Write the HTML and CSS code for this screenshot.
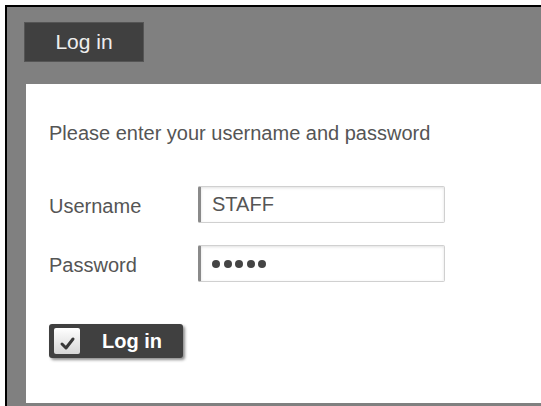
FILE: index.html
```html
<!DOCTYPE html>
<html lang="en">
<head>
<meta charset="utf-8">
<title>Log in</title>
<link rel="stylesheet" href="styles.css">
</head>
<body>
<div class="window">
  <div class="tab">Log in</div>
  <div class="panel">
    <p class="intro">Please enter your username and password</p>
    <div class="form-row first">
      <span class="label">Username</span>
      <div class="field">STAFF</div>
    </div>
    <div class="form-row">
      <span class="label">Password</span>
      <div class="field secret">
        <span class="dot"></span><span class="dot"></span><span class="dot"></span><span class="dot"></span><span class="dot"></span>
      </div>
    </div>
    <button class="btn" type="button">
      <span class="check">
        <svg width="26" height="26" viewBox="0 0 26 26"><polyline points="8,16 12,20 19,11" fill="none" stroke="#383838" stroke-width="3" stroke-linecap="round" stroke-linejoin="round"/></svg>
      </span>
      Log in
    </button>
  </div>
</div>
</body>
</html>
```

FILE: styles.css
```css
html, body {
  margin: 0;
  padding: 0;
  background: #fff;
  font-family: "Liberation Sans", Arial, sans-serif;
}

.window {
  margin: 5px 0 0 5px;
  height: 401px;
  box-sizing: border-box;
  border-top: 2px solid #000;
  border-left: 2px solid #000;
  background: #808080;
  padding: 15px 0 0 17px;
  display: flex;
  flex-direction: column;
  overflow: hidden;
}

.tab {
  width: 120px;
  height: 40px;
  box-sizing: border-box;
  border: 1px solid #555;
  background: #404040;
  color: #eee;
  font-size: 21px;
  display: flex;
  align-items: center;
  justify-content: center;
  flex: none;
}

.panel {
  flex: 1;
  margin: 22px 0 3px 2px;
  background: #fff;
  padding: 38px 0 0 23px;
}

.intro {
  margin: 0;
  font-size: 20px;
  line-height: 23px;
  color: #555;
}

.form-row {
  display: flex;
  align-items: center;
  height: 37px;
  margin-top: 22px;
}

.form-row.first {
  margin-top: 41px;
}

.label {
  width: 149px;
  padding-top: 3px;
  font-size: 20px;
  line-height: 23px;
  color: #555;
}

.field {
  width: 247px;
  height: 37px;
  box-sizing: border-box;
  border: 1px solid #d0d0d0;
  border-left: 3px solid #8a8a8a;
  border-radius: 2px;
  box-shadow: inset 0 1px 3px rgba(0, 0, 0, 0.12);
  padding: 0 11px;
  display: flex;
  align-items: center;
  font-size: 20px;
  line-height: 23px;
  color: #555;
}

.secret {
  gap: 3.5px;
}

.dot {
  width: 8px;
  height: 8px;
  border-radius: 50%;
  background: #444;
}

.btn {
  margin-top: 42px;
  width: 134px;
  height: 34px;
  border: none;
  border-radius: 3px;
  background: #404040;
  box-shadow: 2px 2px 3px rgba(0, 0, 0, 0.45);
  padding: 0 0 0 5px;
  display: flex;
  align-items: center;
  color: #fff;
  font-family: "Liberation Sans", Arial, sans-serif;
  font-weight: bold;
  font-size: 20px;
  cursor: pointer;
}

.check {
  width: 26px;
  height: 26px;
  margin-right: 22px;
  border-radius: 2px;
  background: linear-gradient(#fff, #d6d6d6);
  display: block;
}

.check svg {
  display: block;
}
```
